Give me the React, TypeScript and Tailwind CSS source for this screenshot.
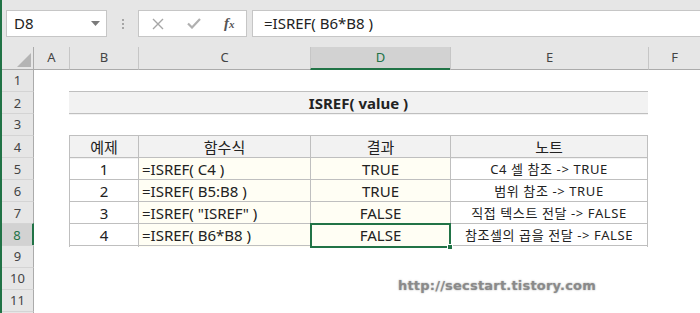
import React from 'react'

const COLS = 'grid shrink-0 grid-cols-[32px_35px_69px_172px_140px_198px_1fr]'
const FONT = "font-['Noto_Sans','Noto_Sans_CJK_KR',sans-serif]"

interface RowData {
  ex: string
  formula: string
  result: string
  note: string
}

const rows: RowData[] = [
  { ex: '1', formula: '=ISREF( C4 )', result: 'TRUE', note: 'C4 셀 참조 -> TRUE' },
  { ex: '2', formula: '=ISREF( B5:B8 )', result: 'TRUE', note: '범위 참조 -> TRUE' },
  { ex: '3', formula: '=ISREF( "ISREF" )', result: 'FALSE', note: '직접 텍스트 전달 -> FALSE' },
  { ex: '4', formula: '=ISREF( B6*B8 )', result: 'FALSE', note: '참조셀의 곱을 전달 -> FALSE' },
]

const RowHead: React.FC<{ n?: number; active?: boolean; first?: boolean }> = ({ n, active, first }) => (
  <div
    className={`flex items-center justify-center text-[13px] ${first ? '' : 'border-t border-[#d4d4d4]'} ${
      active ? 'bg-[#d2d2d2] text-[#217346] border-r-2 border-r-[#217346]' : 'bg-[#e6e6e6] text-[#444] border-r border-r-[#ababab]'
    }`}
  >
    {n}
  </div>
)

const ColHead: React.FC<{ label: string; active?: boolean; border?: boolean }> = ({ label, active, border = true }) => (
  <div
    className={`flex items-center justify-center text-[13px] ${border ? 'border-l border-[#c6c6c6]' : ''} ${
      active ? 'bg-[#d2d2d2] text-[#217346] border-b-2 border-b-[#217346]' : 'text-[#444] border-b border-b-[#ababab]'
    }`}
  >
    {label}
  </div>
)

function Blank({ n, h = 'h-[22px]', topLine = false, label = true }: { n: number; h?: string; topLine?: boolean; label?: boolean }) {
  return (
    <div className={`${COLS} ${h}`}>
      <RowHead n={label ? n : undefined} first={n === 1} />
      <div />
      <div className={`col-span-4 ${topLine ? 'border-t border-[#bfbfbf]' : ''}`} />
      <div />
    </div>
  )
}

export default function App() {
  return (
    <div className={`flex h-[313px] w-[700px] overflow-hidden bg-white ${FONT}`}>
      <div className="w-[2px] shrink-0 bg-[#217346]" />
      <div className="relative flex flex-1 flex-col">
        {/* formula bar */}
        <div className="flex h-[47px] shrink-0 items-start bg-[#e6e6e6] pt-[10px]">
          <div className="ml-[4px] flex h-[27px] w-[101px] items-center justify-between border border-[#c6c6c6] bg-white pl-[7px] pr-[6px]">
            <span className="text-[15px] text-[#222]">D8</span>
            <svg width="9" height="5" viewBox="0 0 9 5"><path d="M0 0h9L4.5 5z" fill="#7a7a7a" /></svg>
          </div>
          <div className="flex h-[27px] w-[31px] flex-col items-center justify-center gap-[2px]">
            <div className="h-[2px] w-[2px] bg-[#a6a6a6]" />
            <div className="h-[2px] w-[2px] bg-[#a6a6a6]" />
            <div className="h-[2px] w-[2px] bg-[#a6a6a6]" />
          </div>
          <div className="flex h-[27px] w-[109px] items-center border border-[#c6c6c6] bg-white">
            <svg className="ml-[13px]" width="12" height="12" viewBox="0 0 12 12">
              <path d="M1 1l10 10M11 1L1 11" stroke="#a6a6a6" strokeWidth="1.4" />
            </svg>
            <svg className="ml-[23px]" width="14" height="11" viewBox="0 0 14 11">
              <path d="M1 5.5l4 4L13 1" stroke="#b0b0b0" strokeWidth="2.2" fill="none" />
            </svg>
            <span className="ml-[23px] font-['Liberation_Serif',serif] text-[15px] font-bold italic text-[#555]">
              f<span className="text-[11px]">x</span>
            </span>
          </div>
          <div className="ml-[5px] flex h-[27px] flex-1 items-center border-y border-l border-[#c6c6c6] bg-white pl-[11px] text-[15px] text-[#222]">
            =ISREF( B6*B8 )
          </div>
        </div>

        {/* column headers */}
        <div className={`${COLS} h-[23px] bg-[#e6e6e6]`}>
          <div className="relative border-b border-r border-[#ababab]">
            <svg className="absolute bottom-[2px] right-[2px]" width="14" height="14" viewBox="0 0 14 14">
              <path d="M14 0v14H0z" fill="#b4b4b4" />
            </svg>
          </div>
          <ColHead label="A" border={false} />
          <ColHead label="B" />
          <ColHead label="C" />
          <ColHead label="D" active />
          <ColHead label="E" />
          <ColHead label="F" />
        </div>

        <Blank n={1} h="h-[21px]" />

        {/* row 2: title */}
        <div className={`${COLS} h-[22px]`}>
          <RowHead n={2} />
          <div />
          <div className="col-span-4 flex items-center justify-center border-t border-[#bfbfbf] bg-[#f2f2f2] text-[15px] font-bold text-[#222]">
            ISREF( value )
          </div>
          <div />
        </div>

        <Blank n={3} topLine />

        {/* row 4: header */}
        <div className={`${COLS} h-[22px] text-[15px] text-[#222]`}>
          <RowHead n={4} />
          <div />
          <div className="flex items-center justify-center border-l border-t border-[#bfbfbf] bg-[#f2f2f2]">예제</div>
          <div className="flex items-center justify-center border-l border-t border-[#bfbfbf] bg-[#f2f2f2]">함수식</div>
          <div className="flex items-center justify-center border-l border-t border-[#bfbfbf] bg-[#f2f2f2]">결과</div>
          <div className="flex items-center justify-center border-x border-t border-[#bfbfbf] bg-[#f2f2f2]">노트</div>
          <div />
        </div>

        {rows.map((r, i) => {
          const n = i + 5
          const sel = n === 8
          return (
            <div key={n} className={`${COLS} h-[22px] text-[15px] text-[#222]`}>
              <RowHead n={n} active={sel} />
              <div />
              <div className="flex items-center justify-center border-l border-t border-[#bfbfbf]">{r.ex}</div>
              <div className="flex items-center border-l border-t border-[#bfbfbf] bg-[#fffef4] pl-[3px]">{r.formula}</div>
              <div className="relative flex items-center justify-center border-l border-t border-[#bfbfbf] bg-[#fffef4]">
                {r.result}
                {sel && (
                  <>
                    <div className="absolute -inset-[1px] border-2 border-[#217346]" />
                    <div className="absolute -bottom-[3px] -right-[3px] h-[6px] w-[6px] border border-white bg-[#217346]" />
                  </>
                )}
              </div>
              <div className="flex items-center justify-center border-x border-t border-[#bfbfbf] text-[13px] tracking-[0.6px]">{r.note}</div>
              <div />
            </div>
          )
        })}

        <Blank n={9} topLine />
        <Blank n={10} />
        <Blank n={11} />
        <Blank n={12} label={false} />

        {/* watermark */}
        <div className="absolute left-[396px] top-[276px] font-['DejaVu_Sans',sans-serif] text-[13px] font-bold tracking-[0.2px] text-[#8a8a8a] [text-shadow:0_0_2px_rgba(0,0,0,0.35)]">
          http://secstart.tistory.com
        </div>
      </div>
    </div>
  )
}
